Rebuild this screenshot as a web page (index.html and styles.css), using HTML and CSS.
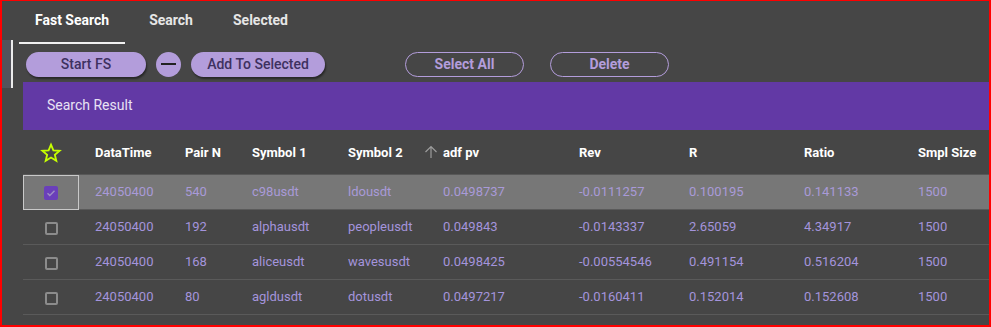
FILE: index.html
```html
<!DOCTYPE html>
<html lang="en">
<head>
  <meta charset="UTF-8" />
  <title>Fast Search</title>
  <link rel="stylesheet" href="styles.css">
</head>
<body>

<div class="frame">
  <div class="tabs">
    <div class="tab active">Fast Search</div>
    <div class="tab">Search</div>
    <div class="tab">Selected</div>
  </div>

  <div class="body">
    <div class="side">
      <div class="side-strip"></div>
    </div>

    <div class="main">
      <div class="toolbar">
        <button class="btn fill start">Start FS</button>
        <button class="round"><span class="dash"></span></button>
        <button class="btn fill add">Add To Selected</button>
        <button class="btn outline sel">Select All</button>
        <button class="btn outline del">Delete</button>
      </div>

      <div class="result-bar">Search Result</div>

      <table class="grid">
        <colgroup>
          <col style="width:56px">
          <col style="width:90px">
          <col style="width:67px">
          <col style="width:96px">
          <col style="width:95px">
          <col style="width:136px">
          <col style="width:110px">
          <col style="width:115px">
          <col style="width:114px">
          <col>
        </colgroup>
        <thead>
          <tr>
            <th class="chk">
              <svg width="22" height="22" viewBox="0 0 24 24"><path d="M12 2.8l2.6 6.3 6.8.5-5.2 4.4 1.6 6.6L12 17l-5.8 3.6 1.6-6.6-5.2-4.4 6.8-.5z" fill="none" stroke="#c6ff00" stroke-width="2" stroke-linejoin="miter"/></svg>
            </th>
            <th>DataTime</th>
            <th>Pair N</th>
            <th>Symbol 1</th>
            <th>Symbol 2</th>
            <th><svg class="sort" width="14" height="14" viewBox="0 0 14 14"><path d="M7 13V1.5M1.5 7L7 1.5 12.5 7" fill="none" stroke="#9c9c9c" stroke-width="1.2"/></svg>adf pv</th>
            <th>Rev</th>
            <th>R</th>
            <th>Ratio</th>
            <th>Smpl Size</th>
          </tr>
        </thead>
        <tbody>
          <tr class="picked">
            <td class="chk focus"><span class="box on"><svg width="14" height="14" viewBox="0 0 14 14"><path d="M3.5 7.2l2.3 2.3 4.7-4.7" fill="none" stroke="#9f8fc4" stroke-width="1.4"/></svg></span></td>
            <td>24050400</td><td>540</td><td>c98usdt</td><td>ldousdt</td>
            <td>0.0498737</td><td>-0.0111257</td><td>0.100195</td><td>0.141133</td><td>1500</td>
          </tr>
          <tr>
            <td class="chk"><span class="box"></span></td>
            <td>24050400</td><td>192</td><td>alphausdt</td><td>peopleusdt</td>
            <td>0.049843</td><td>-0.0143337</td><td>2.65059</td><td>4.34917</td><td>1500</td>
          </tr>
          <tr>
            <td class="chk"><span class="box"></span></td>
            <td>24050400</td><td>168</td><td>aliceusdt</td><td>wavesusdt</td>
            <td>0.0498425</td><td>-0.00554546</td><td>0.491154</td><td>0.516204</td><td>1500</td>
          </tr>
          <tr>
            <td class="chk"><span class="box"></span></td>
            <td>24050400</td><td>80</td><td>agldusdt</td><td>dotusdt</td>
            <td>0.0497217</td><td>-0.0160411</td><td>0.152014</td><td>0.152608</td><td>1500</td>
          </tr>
        </tbody>
      </table>
    </div>
  </div>
</div>

</body>
</html>
```

FILE: styles.css
```css
body {
  margin: 0;
  font-family: Roboto, 'Liberation Sans', sans-serif;
  background: #464646;
}

.frame {
  box-sizing: border-box;
  width: 991px;
  height: 327px;
  border: 2px solid #ff0000;
  border-top-width: 1px;
  background: #464646;
  overflow: hidden;
}

/* tabs */
.tabs {
  display: flex;
  gap: 8px;
  margin-left: 17px;
  height: 43px;
}

.tab {
  padding: 0 16px;
  height: 41px;
  line-height: 38px;
  font-size: 14px;
  font-weight: 700;
  color: #e6e6e6;
  border-bottom: 2px solid transparent;
}

.tab.active {
  color: #ffffff;
  border-bottom-color: #f0f0f0;
}

.body {
  display: flex;
}

.side {
  width: 21px;
  flex: none;
  margin-top: -4px;
}

.side-strip {
  width: 9px;
  height: 48px;
  background: #53535b;
  border-right: 2px solid #ececec;
}

.main {
  flex: 1;
  min-width: 0;
}

/* toolbar */
.toolbar {
  box-sizing: border-box;
  display: flex;
  align-items: center;
  height: 38px;
  padding: 2px 0 0 3px;
}

.btn {
  height: 25px;
  border-radius: 13px;
  font-family: inherit;
  font-size: 14px;
  font-weight: 500;
  padding: 0;
  cursor: pointer;
}

.fill {
  background: #b39ddb;
  color: #3e3160;
  border: none;
  box-shadow: 1px 2px 2px rgba(0,0,0,0.45);
}

.outline {
  background: transparent;
  color: #b39ddb;
  border: 1px solid #b39ddb;
  font-weight: 700;
  height: 25px;
}

.start { width: 120px; }
.add { width: 134px; margin-left: 10px; }
.sel { width: 119px; margin-left: 80px; }
.del { width: 119px; margin-left: 26px; }

.round {
  width: 25px;
  height: 25px;
  margin-left: 10px;
  border-radius: 50%;
  border: none;
  background: #b39ddb;
  padding: 0;
  display: flex;
  align-items: center;
  justify-content: center;
}

.dash {
  width: 15px;
  height: 2px;
  background: #222222;
}

/* purple bar */
.result-bar {
  height: 48px;
  line-height: 47px;
  padding-left: 24px;
  background: #6239a5;
  color: #e8e2f4;
  font-size: 14px;
}

/* table */
.grid {
  width: 100%;
  border-collapse: separate;
  border-spacing: 0;
  table-layout: fixed;
}

.grid th,
.grid td {
  box-sizing: border-box;
  padding: 0 0 0 16px;
  text-align: left;
  white-space: nowrap;
}

.grid th {
  height: 45px;
  font-size: 13px;
  font-weight: 700;
  color: #ffffff;
  border-bottom: 1px solid #585858;
}

.grid td {
  height: 35px;
  padding-bottom: 2px;
  font-size: 13px;
  line-height: 15px;
  color: #a494dc;
  border-bottom: 1px solid #5a5a5a;
}

.grid .chk {
  padding: 0;
  text-align: center;
}

.grid th.chk svg {
  display: block;
  margin: 2px auto 0;
}

.sort {
  vertical-align: -2px;
  margin-left: -19px;
  margin-right: 5px;
}

.picked td {
  background: #777777;
  color: #a99ad8;
}

.picked td.focus {
  outline: 1px solid #c9c9c9;
  outline-offset: -1px;
}

.box {
  display: inline-block;
  box-sizing: border-box;
  width: 13px;
  height: 13px;
  border: 2px solid #8c8c8c;
  border-radius: 2px;
  vertical-align: middle;
}

.box.on {
  width: 14px;
  height: 14px;
  border: none;
  background: #6a3fba;
}

.box.on svg {
  display: block;
}
```
